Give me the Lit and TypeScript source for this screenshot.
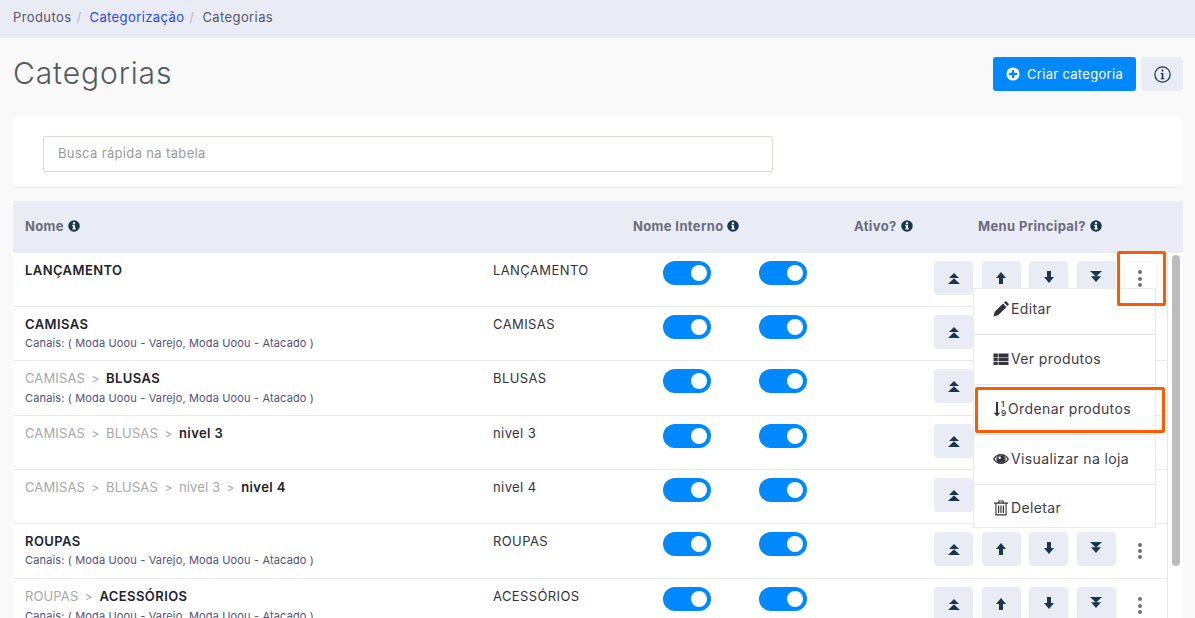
import { LitElement, html, css, svg } from "lit";
import { customElement } from "lit/decorators.js";

const infoIcon = html`<svg class="inf" viewBox="0 0 16 16"><circle cx="8" cy="8" r="7.7" fill="#17374f"/><path fill="#fff" d="M6.600 3h2.800v2.300H6.600zM5.800 6.300h3.600v4.600h1v1.900H5.800v-1.900h1V8.200h-1z"/></svg>`;

const icons = {
  first: svg`<path d="M8 3 13 8H3zM8 8.300 14 14H2z" fill="#17374f"/>`,
  up: svg`<path d="M8 2 13 8H10V14H6V8H3z" fill="#17374f"/>`,
  down: svg`<path d="M8 13 13 7H10V1H6V7H3z" fill="#17374f"/>`,
  last: svg`<path d="M2 1H14L8 6.700zM3 6.300H13L8 12z" fill="#17374f"/>`,
};

interface Row { parents: string[]; name: string; internal: string; channels: boolean; }

const rows: Row[] = [
  { parents: [], name: "LANÇAMENTO", internal: "LANÇAMENTO", channels: false },
  { parents: [], name: "CAMISAS", internal: "CAMISAS", channels: true },
  { parents: ["CAMISAS"], name: "BLUSAS", internal: "BLUSAS", channels: true },
  { parents: ["CAMISAS", "BLUSAS"], name: "nivel 3", internal: "nivel 3", channels: false },
  { parents: ["CAMISAS", "BLUSAS", "nivel 3"], name: "nivel 4", internal: "nivel 4", channels: false },
  { parents: [], name: "ROUPAS", internal: "ROUPAS", channels: true },
  { parents: ["ROUPAS"], name: "ACESSÓRIOS", internal: "ACESSÓRIOS", channels: true },
];

@customElement("app-root")
export class AppRoot extends LitElement {
  static styles = css`
    :host { display: block; height: 618px; overflow: hidden; font-family: Inter, "Liberation Sans", sans-serif; }
    .page { position: relative; height: 618px; overflow: hidden; background: #f9f9f9; color: #2b2b33; }
    .crumbs { height: 38px; box-sizing: border-box; padding: 0 0 5px 13px; background: #e9ecf4; display: flex; align-items: center; font-size: 13px; color: #55556d; letter-spacing: .4px; }
    .crumbs .sep { color: #b8b8c0; margin: 0 8px 0 5px; }
    .crumbs .link { color: #2745f5; }
    .head { height: 72px; margin-bottom: 7px; padding: 0 12px 0 13px; display: flex; align-items: center; justify-content: space-between; }
    h1 { margin: 0 0 2px; font-size: 30px; font-weight: 300; color: #55595e; letter-spacing: .9px; }
    .head-btns { display: flex; gap: 5px; }
    .create { height: 34px; width: 143px; box-sizing: border-box; border-radius: 3px; background: #0088ff; color: #fff; font-size: 13px; display: flex; align-items: center; justify-content: center; gap: 7px; letter-spacing: .3px; }
    .create svg { width: 14px; height: 14px; }
    .help { width: 42px; height: 34px; border-radius: 3px; background: #e9ecf4; display: flex; align-items: center; justify-content: center; }
    .help svg { width: 17px; height: 17px; }
    .card { margin: 0 12px 14px 13px; height: 70px; box-sizing: border-box; padding: 19px 30px; background: #fff; border-radius: 4px; box-shadow: 0 1px 1px rgba(0,0,0,.06); }
    .search { width: 730px; height: 36px; box-sizing: border-box; border: 1px solid #dedacb; border-radius: 3px; background: #fff; padding: 0 0 2px 14px; display: flex; align-items: center; font-size: 13px; color: #9a9a9a; letter-spacing: .35px; }
    .table { margin: 0 12px 0 13px; }
    .thead { height: 51.67px; background: #e9ecf4; display: flex; align-items: center; font-size: 13px; font-weight: 700; color: #6b6b7e; letter-spacing: .36px; padding-bottom: 1px; box-sizing: border-box; }
    .th { display: flex; align-items: center; gap: 4px; padding-left: 12px; box-sizing: border-box; }
    .th1 { width: 608px; }
    .th2 { width: 221px; }
    .th3 { width: 124px; }
    .inf { width: 12px; height: 12px; flex: none; }
    .tbody { display: flex; background: #fff; }
    .rows { width: 1155px; box-sizing: border-box; border-right: 1px solid #e6e6e6; }
    .track { width: 15px; box-sizing: border-box; padding: 2px 3px 0 4px; }
    .thumb { height: 311px; background: #bdbdbd; border-radius: 4px; }
    .row { height: 54.33px; box-sizing: border-box; border-bottom: 1px solid #e9e9e9; display: flex; }
    .name { width: 468px; box-sizing: border-box; padding: 9px 12px 0; }
    .title { font-size: 13px; line-height: 16px; letter-spacing: .12px; color: #a8a8a8; white-space: nowrap; }
    .title b { color: #23232b; font-weight: 600; letter-spacing: .42px; }
    .title i { font-style: normal; margin: 0 3px; font-size: 12px; }
    .chan { font-size: 11px; line-height: 13px; margin-top: 5px; color: #50507a; letter-spacing: .15px; white-space: nowrap; }
    .internal { width: 170px; box-sizing: border-box; padding: 9px 12px 0; font-size: 13px; line-height: 16px; letter-spacing: .4px; color: #33333b; }
    .tog { width: 96px; box-sizing: border-box; padding: 8px 0 0 12px; }
    .switch { width: 48px; height: 24px; border-radius: 12px; background: #0088ff; display: flex; justify-content: flex-end; padding: 4px; box-sizing: border-box; }
    .switch span { width: 16px; height: 16px; border-radius: 50%; background: #fff; }
    .actions { padding: 8px 0 0 91px; display: flex; gap: 8.5px; align-items: flex-start; }
    .mv { width: 39px; height: 34px; border-radius: 4px; background: #e9ecf4; display: flex; align-items: center; justify-content: center; }
    .mv svg { width: 16px; height: 16px; }
    .kebab { margin-left: -.5px; width: 33px; height: 34px; box-sizing: border-box; padding-top: 4px; border: 1px solid transparent; border-radius: 5px; display: flex; flex-direction: column; gap: 2.200px; align-items: center; justify-content: center; }
    .row:first-child .kebab { border-color: #f5f5f5; padding-top: 2px; }
    .kebab span { width: 4px; height: 4px; border-radius: 50%; background: #6e6e80; }
    .menu { position: absolute; left: 973px; top: 288px; width: 183px; box-sizing: border-box; background: #fff; border: 1px solid #eaeaea; font-size: 14px; color: #3c3c44; letter-spacing: .38px; }
    .item { height: 50px; box-sizing: border-box; border-bottom: 1px solid #e4e4e4; display: flex; align-items: center; padding: 0 0 2px 19px; gap: 2px; }
    .item svg { width: 16px; height: 16px; flex: none; }
    .item.first { height: 46px; padding-bottom: 6px; }
    .item.last { height: 42px; padding-top: 3px; padding-bottom: 0; border-bottom: none; }
    .nums { display: flex; flex-direction: column; font-size: 8px; font-weight: 600; line-height: 8.500px; width: 6px; margin: 0 -1px 0 -10px; color: #3c3c44; letter-spacing: 0; }
    .mark { position: absolute; box-sizing: border-box; border: 3px solid #ff5a00; border-radius: 2px; }
    .mark1 { left: 1117px; top: 251px; width: 49px; height: 55px; }
    .mark2 { left: 975px; top: 387px; width: 190px; height: 46px; }
  `;

  private renderRow(r: Row) {
    return html`<div class="row">
      <div class="name">
        <div class="title">${r.parents.map((p) => html`${p}<i> &gt; </i>`)}<b>${r.name}</b></div>
        ${r.channels ? html`<div class="chan">Canais: ( Moda Uoou - Varejo, Moda Uoou - Atacado )</div>` : ""}
      </div>
      <div class="internal">${r.internal}</div>
      <div class="tog"><div class="switch"><span></span></div></div>
      <div class="tog"><div class="switch"><span></span></div></div>
      <div class="actions">
        ${[icons.first, icons.up, icons.down, icons.last].map((ic) => html`<div class="mv"><svg viewBox="0 0 16 16">${ic}</svg></div>`)}
        <div class="kebab"><span></span><span></span><span></span></div>
      </div>
    </div>`;
  }

  render() {
    return html`<div class="page">
      <div class="crumbs">
        <span>Produtos</span><span class="sep">/</span>
        <span class="link">Categorização</span><span class="sep">/</span>
        <span>Categorias</span>
      </div>
      <div class="head">
        <h1>Categorias</h1>
        <div class="head-btns">
          <div class="create">
            <svg viewBox="0 0 16 16"><circle cx="8" cy="8" r="7.500" fill="#fff"/><path d="M6.700 3.500h2.600v3.200h3.200v2.600H9.300v3.200H6.700V9.300H3.500V6.700h3.200z" fill="#0088ff"/></svg>
            <span>Criar categoria</span>
          </div>
          <div class="help">
            <svg viewBox="0 0 16 16"><circle cx="8" cy="8" r="7.200" fill="none" stroke="#17374f" stroke-width="1.200"/><path d="M7.200 3.400h1.600v1.700H7.200zM6.300 6.500h2.500v5h1v1H6.300v-1h1v-4h-1z" fill="#17374f"/></svg>
          </div>
        </div>
      </div>
      <div class="card"><div class="search">Busca rápida na tabela</div></div>
      <div class="table">
        <div class="thead">
          <div class="th th1">Nome ${infoIcon}</div>
          <div class="th th2">Nome Interno ${infoIcon}</div>
          <div class="th th3">Ativo? ${infoIcon}</div>
          <div class="th">Menu Principal? ${infoIcon}</div>
        </div>
        <div class="tbody">
          <div class="rows">${rows.map((r) => this.renderRow(r))}</div>
          <div class="track"><div class="thumb"></div></div>
        </div>
      </div>
      <div class="menu">
        <div class="item first">
          <svg viewBox="0 0 16 16"><path d="M0.500 15.500l1.200-4.700L10 2.500l3.500 3.500-8.300 8.300zM11 1.500l1-1c.4-.4 1-.4 1.400 0l2.100 2.100c.4.4.4 1 0 1.400l-1 1z" fill="#33333b"/></svg>
          <span>Editar</span>
        </div>
        <div class="item">
          <svg viewBox="0 0 16 16"><path d="M.500 2.500h4.300v3.400H.500zM5.500 2.500h10v3.400h-10zM.500 6.600h4.300V10H.500zM5.500 6.600h10V10h-10zM.500 10.700h4.300v3.300H.500zM5.500 10.700h10V14h-10z" fill="#33333b"/></svg>
          <span>Ver produtos</span>
        </div>
        <div class="item">
          <svg viewBox="0 0 16 16"><path d="M3 1h2v10.800h2.200L4 15.500.8 11.800H3z" fill="#33333b"/></svg>
          <span class="nums"><span>1</span><span>9</span></span>
          <span>Ordenar produtos</span>
        </div>
        <div class="item">
          <svg viewBox="0 0 16 16"><path fill-rule="evenodd" d="M0 8C1.900 4.800 4.800 3 8 3s6.100 1.800 8 5c-1.900 3.200-4.800 5-8 5S1.900 11.200 0 8zM5 4.700C3.700 5.200 2.500 6.300 1.600 8c.9 1.500 2 2.500 3.300 3.200C3.900 10.400 3.300 9.300 3.300 8S3.900 5.500 5 4.700zM11 4.700C12.100 5.500 12.700 6.700 12.700 8s-.6 2.400-1.600 3.200c1.300-.7 2.400-1.700 3.300-3.200-.9-1.700-2.100-2.800-3.400-3.300zM8 4.600c-1.900 0-3.400 1.500-3.400 3.400s1.500 3.400 3.400 3.400 3.400-1.500 3.400-3.400S9.900 4.600 8 4.600z" fill="#33333b"/><circle cx="8" cy="8" r="3.600" fill="#33333b"/><circle cx="6.700" cy="6.700" r="1.200" fill="#fff"/></svg>
          <span>Visualizar na loja</span>
        </div>
        <div class="item last">
          <svg viewBox="0 0 16 16"><path fill-rule="evenodd" d="M5.800 0.500h4.400l1 2H15v1.300h-1.400V15.500H2.400V3.800H1V2.500h3.800zM6.500 1.500 6.200 2.500h3.600l-.3-1zM3.500 3.800v10.500h9V3.800zM5 5.500h1.200v7.500H5zM7.400 5.500h1.200v7.500H7.400zM9.800 5.500H11v7.500H9.800z" fill="#33333b"/></svg>
          <span>Deletar</span>
        </div>
      </div>
      <div class="mark mark1"></div>
      <div class="mark mark2"></div>
    </div>`;
  }
}
